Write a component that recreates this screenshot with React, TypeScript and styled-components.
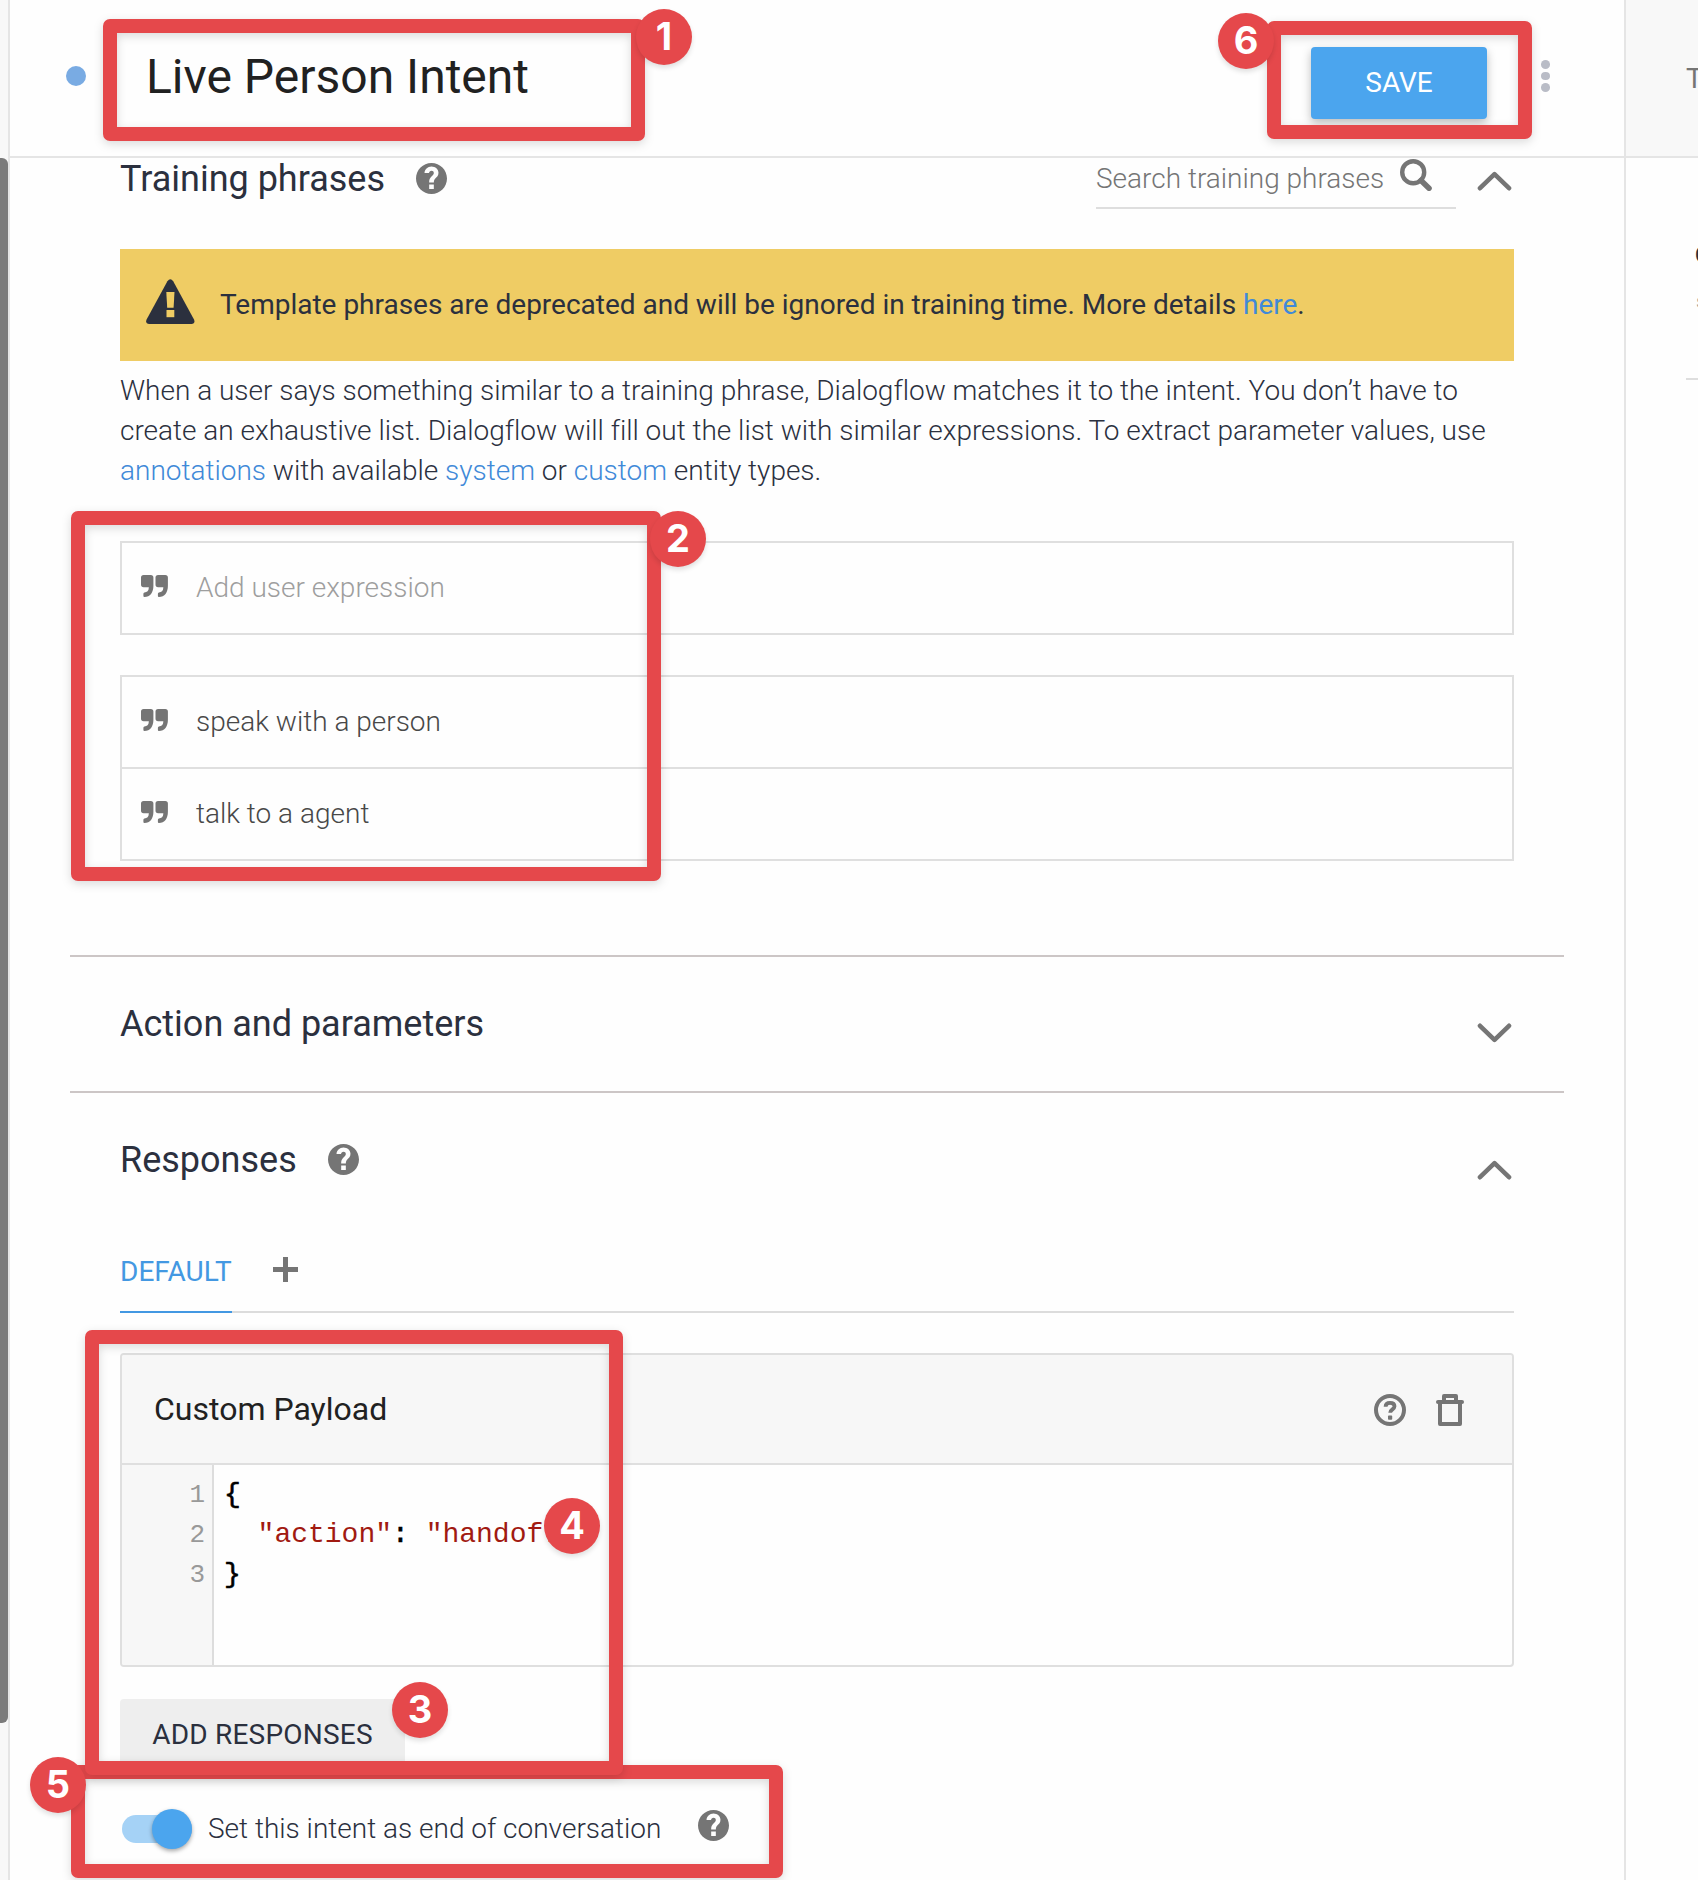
import React from "react";
import styled, { createGlobalStyle, css } from "styled-components";

const GlobalStyle = createGlobalStyle`
  html, body { margin: 0; padding: 0; background: #fefefe; }
  * { box-sizing: border-box; }
  body { font-family: Roboto, "Liberation Sans", sans-serif; overflow: hidden; }
`;

const Page = styled.div`
  position: relative;
  display: flex;
  width: 1698px;
  height: 1880px;
  overflow: hidden;
  color: #2b303e;
  font-size: 28px;
  line-height: 40px;
`;

const ScrollTrack = styled.div`
  width: 10px;
  flex: none;
  padding-top: 158px;
  background: #f8f8f8;
  border-right: 2px solid #e5e5e5;
`;

const ScrollThumb = styled.div`
  width: 8px;
  height: 1565px;
  background: #7b7b7b;
  border-radius: 0 6px 6px 0;
`;

const Main = styled.main`
  flex: none;
  width: 1614px;
  display: flex;
  flex-direction: column;
`;

const Header = styled.header`
  flex: none;
  height: 158px;
  display: flex;
  align-items: flex-start;
  border-bottom: 2px solid #e5e5e5;
  padding-left: 56px;
`;

const StatusDot = styled.span`
  width: 20px;
  height: 20px;
  margin-top: 66px;
  border-radius: 50%;
  background: #79abe3;
`;

const IntentName = styled.h1`
  flex: 1;
  margin: 49px 0 0 60px;
  font-size: 48px;
  line-height: 56px;
  font-weight: 400;
  color: #212121;
`;

const SaveButton = styled.button`
  width: 176px;
  height: 72px;
  margin-top: 47px;
  padding: 0;
  border: 0;
  border-radius: 4px;
  background: #4ba5ee;
  color: #fff;
  font: 400 28px/72px Roboto, sans-serif;
  box-shadow: 0 4px 10px rgba(0, 0, 0, 0.26);
`;

const MoreDots = styled.div`
  display: flex;
  flex-direction: column;
  gap: 3px;
  margin: 60px 74px 0 54px;
`;

const Dot = styled.i`
  width: 9px;
  height: 8.500px;
  border-radius: 50%;
  background: #b9bcc6;
`;

const Section = styled.section<{ $h: number; $divider?: boolean }>`
  flex: none;
  height: ${(p) => p.$h}px;
  margin: 0 60px;
  padding: 0 50px;
  ${(p) => p.$divider && css`border-bottom: 2px solid #ccc6c6;`}
`;

const SectionHead = styled.div<{ $h: number; $pad: number }>`
  display: flex;
  align-items: flex-start;
  height: ${(p) => p.$h}px;
  padding-top: ${(p) => p.$pad}px;
`;

const SectionTitle = styled.h2`
  margin: 0;
  font-size: 36px;
  line-height: 42px;
  font-weight: 400;
`;

const Shift = styled.span<{ $top?: number; $left?: number; $right?: number }>`
  display: block;
  line-height: 0;
  margin: ${(p) => p.$top ?? 0}px ${(p) => p.$right ?? 0}px 0 ${(p) => p.$left ?? 0}px;
`;

const Spacer = styled.span`
  flex: 1;
`;

const SearchBox = styled.div`
  display: flex;
  justify-content: space-between;
  width: 360px;
  height: 51px;
  padding: 0 24px 0 0;
  border-bottom: 2px solid #dedede;
  font-weight: 300;
  line-height: 42px;
  color: #757575;
`;

const Warning = styled.div`
  display: flex;
  align-items: center;
  height: 112px;
  padding-left: 26px;
  background: #efcc64;

  svg {
    margin-bottom: 8px;
  }
`;

const WarningText = styled.span`
  margin-left: 25px;
  letter-spacing: -0.01px;
`;

const Link = styled.a`
  color: #4089d8;
`;

const Paragraph = styled.p`
  margin: 10px 0 50px;
  font-weight: 300;
  letter-spacing: -0.01px;
  font-variant-ligatures: common-ligatures;
`;

const PhraseList = styled.div`
  border: 2px solid #dfdfdf;
  margin-bottom: 40px;
`;

const PhraseRow = styled.div<{ $muted?: boolean }>`
  display: flex;
  align-items: center;
  height: 90px;
  padding: 0 0 0 19px;
  gap: 28px;
  font-weight: 300;
  color: ${(p) => (p.$muted ? "#9e9e9e" : "#484848")};

  svg {
    margin-bottom: 4px;
  }

  & + & {
    height: 92px;
    border-top: 2px solid #dfdfdf;
  }
`;

const Tabs = styled.div`
  display: flex;
  height: 73px;
  border-bottom: 2px solid #dcdcdc;
`;

const Tab = styled.div`
  width: 112px;
  height: 73px;
  padding-top: 12px;
  border-bottom: 2px solid #4398e2;
  color: #4398e2;
`;

const Card = styled.div`
  height: 314px;
  margin-top: 40px;
  display: flex;
  flex-direction: column;
  border: 2px solid #dfdfdf;
  border-radius: 4px;
  overflow: hidden;
`;

const CardHead = styled.div`
  display: flex;
  align-items: center;
  height: 110px;
  flex: none;
  padding: 0 48px 0 32px;
  gap: 30px;
  border-bottom: 2px solid #dfdfdf;
  background: #f7f7f7;
  color: #212121;
  font-size: 32px;

  svg {
    margin-top: 2px;
  }
`;

const Editor = styled.div`
  flex: 1;
  display: flex;
  font-family: "Liberation Mono", monospace;
`;

const Gutter = styled.div`
  width: 92px;
  padding: 10px 7px 0 0;
  border-right: 2px solid #dddddd;
  background: #f7f7f7;
  color: #999;
  font-size: 26px;
  text-align: right;
`;

const Code = styled.pre`
  margin: 0;
  padding: 10px 0 0 10px;
  font: inherit;
  color: #000;
  -webkit-text-stroke: 0.6px #000;
`;

const Str = styled.span`
  color: #a11a11;
  -webkit-text-stroke: 0;
`;

const AddButton = styled.button`
  display: block;
  width: 285px;
  height: 72px;
  margin-top: 32px;
  padding: 0;
  border: 0;
  border-radius: 4px;
  background: #eeeeee;
  color: #2b303e;
  font: 400 28px/70px Roboto, sans-serif;
  letter-spacing: 0.2px;
`;

const EndRow = styled.div`
  display: flex;
  align-items: flex-start;
  margin-top: 38px;
  padding-left: 2px;
  font-weight: 300;
`;

const ToggleTrack = styled.span`
  display: flex;
  justify-content: flex-end;
  align-items: center;
  width: 70px;
  height: 28px;
  margin: 6px 16px 0 0;
  border-radius: 14px;
  background: #a5d2f6;
`;

const ToggleThumb = styled.span`
  flex: none;
  width: 40px;
  height: 40px;
  border-radius: 50%;
  background: #4ba5ee;
  box-shadow: 0 2px 4px rgba(0, 0, 0, 0.35);
`;

const Console = styled.aside`
  flex: none;
  width: 74px;
  border-left: 2px solid #e5e5e5;
  overflow: hidden;
  white-space: nowrap;
`;

const ConsoleHead = styled.div`
  height: 158px;
  padding: 59px 0 0 60px;
  border-bottom: 2px solid #e5e5e5;
  background: #f8f8f8;
  color: #757575;
`;

const ConsoleBody = styled.div`
  height: 222px;
  margin-left: 60px;
  padding: 77px 0 0 9px;
  border-bottom: 2px solid #dedede;
`;

const AgentName = styled.div`
  font-size: 24px;
  font-weight: 700;
`;

const AgentNote = styled.div`
  padding: 6px 0 0 1px;
  font-size: 20px;
  color: #999;
`;

const Frame = styled.div<{ $x: number; $y: number; $w: number; $h: number }>`
  position: absolute;
  left: ${(p) => p.$x}px;
  top: ${(p) => p.$y}px;
  width: ${(p) => p.$w}px;
  height: ${(p) => p.$h}px;
  border: 14px solid #e5484b;
  border-radius: 7px;
  filter: drop-shadow(0 3px 5px rgba(0, 0, 0, 0.14));
`;

const Badge = styled.div<{ $x: number; $y: number }>`
  position: absolute;
  left: ${(p) => p.$x}px;
  top: ${(p) => p.$y}px;
  width: 56px;
  height: 56px;
  border-radius: 50%;
  background: #e5484b;
  color: #fff;
  font: 700 38px/54px Inter, sans-serif;
  text-align: center;
  box-shadow: 0 3px 5px rgba(0, 0, 0, 0.12);
`;

const GREY = "#757575";

const HelpFilled = () => (
  <svg width="31" height="31" viewBox="2 2 20 20" fill={GREY}>
    <path d="M12 2C6.48 2 2 6.48 2 12s4.48 10 10 10 10-4.48 10-10S17.52 2 12 2zm1.5 16.8h-3v-2.9h3v2.9zm2.35-8.3-.95.95c-.9.9-1.4 1.6-1.4 3.05h-3v-.6c0-1.1.5-2.1 1.2-2.9l1.25-1.25c.4-.35.55-.8.55-1.25 0-.95-.65-1.5-1.5-1.5s-1.6.65-1.6 1.5H7.5C7.5 6.1 9.5 4.2 12 4.2s4.5 1.8 4.5 4.1c0 .9-.25 1.65-.65 2.2z" />
  </svg>
);

const HelpOutline = () => (
  <svg width="32" height="32" viewBox="0 0 32 32" fill="none">
    <circle cx="16" cy="16" r="14" stroke={GREY} strokeWidth="4" />
    <path d="M11.600 12.700c0-2.500 1.700-3.900 4.400-3.900 2.800 0 4.500 1.400 4.500 3.500 0 3.100-4.300 3.100-4.300 6.500" stroke={GREY} strokeWidth="3.800" />
    <rect x="14" y="21.600" width="4.200" height="4.200" rx=".8" fill={GREY} />
  </svg>
);

const Trash = () => (
  <svg width="28" height="32" viewBox="0 0 28 32" fill="none" stroke={GREY} strokeWidth="4" strokeLinejoin="round" strokeLinecap="round">
    <path d="M4 8v22h20V8" />
    <path d="M2 8h24" />
    <path d="M8 7.500V2h12v5.500" />
  </svg>
);

const Chevron = ({ down }: { down?: boolean }) => (
  <svg width="35" height="20" viewBox="0 0 35 20" fill="none" stroke={GREY} strokeWidth="4.600" strokeLinecap="round" strokeLinejoin="round">
    <path d={down ? "M3 2.800 17.500 16.800 32 2.800" : "M3 17.200 17.500 3.200 32 17.200"} />
  </svg>
);

const SearchIcon = () => (
  <svg width="32" height="32" viewBox="0 0 32 32" fill="none" stroke={GREY}>
    <circle cx="13.2" cy="13.2" r="11" strokeWidth="4.4" />
    <path d="M21 21.5 29 29.2" strokeWidth="5.6" strokeLinecap="round" />
  </svg>
);

const WarnIcon = () => (
  <svg width="49" height="45" viewBox="0 0 49 45">
    <path d="M21.4 2.2Q24.3-1.8 27.2 2.2L48 40.5Q49.6 44.8 45.4 45H3.2Q-1 44.8.6 40.5Z" fill="#2b303e" />
    <path d="M20.3 13h8.2l-.9 15.8h-6.4z" fill="#efcc64" />
    <rect x="20.5" y="31" width="7.8" height="7.2" fill="#efcc64" />
  </svg>
);

const QuoteIcon = () => (
  <svg width="27" height="22" viewBox="0 0 27 22" fill={GREY}>
    <path d="M2.6 0h7.2q2.6 0 2.6 2.6v8.2c0 6.8-3.2 11.2-9 11.2q-1 0-1-1v-2.2q0-1 1-1.2c2.6-.3 4.4-1.8 4.4-4.8v-.6H2.6Q0 12.200 0 9.600v-7q0-2.600 2.600-2.600z" />
    <path d="M17.100 0h7.200q2.600 0 2.600 2.600v8.200c0 6.800-3.200 11.200-9 11.200q-1 0-1-1v-2.200q0-1 1-1.200c2.600-.3 4.400-1.800 4.400-4.800v-.6h-5.200q-2.600 0-2.600-2.600v-7q0-2.600 2.600-2.600z" />
  </svg>
);

const PlusIcon = () => (
  <svg width="25" height="25" viewBox="0 0 25 25" stroke={GREY} strokeWidth="5">
    <path d="M12.500 0v25M0 12.500h25" />
  </svg>
);

const frames = [
  { x: 103, y: 19, w: 542, h: 122 },
  { x: 1267, y: 21, w: 265, h: 118 },
  { x: 71, y: 511, w: 590, h: 370 },
  { x: 71, y: 1765, w: 712, h: 113 },
  { x: 85, y: 1330, w: 538, h: 445 },
];

const badges = [
  { n: 1, x: 636, y: 9 },
  { n: 6, x: 1218, y: 13 },
  { n: 2, x: 650, y: 511 },
  { n: 4, x: 544, y: 1498 },
  { n: 3, x: 392, y: 1682 },
  { n: 5, x: 30, y: 1757 },
];

export default function App() {
  return (
    <Page>
      <GlobalStyle />
      <ScrollTrack>
        <ScrollThumb />
      </ScrollTrack>
      <Main>
        <Header>
          <StatusDot />
          <IntentName>Live Person Intent</IntentName>
          <SaveButton>SAVE</SaveButton>
          <MoreDots>
            <Dot />
            <Dot />
            <Dot />
          </MoreDots>
        </Header>

        <Section $h={799} $divider>
          <SectionHead $h={91} $pad={0}>
            <SectionTitle>Training phrases</SectionTitle>
            <Shift $top={5} $left={31}>
              <HelpFilled />
            </Shift>
            <Spacer />
            <SearchBox>
              Search training phrases
              <Shift $top={1}>
                <SearchIcon />
              </Shift>
            </SearchBox>
            <Shift $top={13} $left={21} $right={2}>
              <Chevron />
            </Shift>
          </SectionHead>
          <Warning>
            <WarnIcon />
            <WarningText>
              Template phrases are deprecated and will be ignored in training time. More details <Link>here</Link>.
            </WarningText>
          </Warning>
          <Paragraph>
            When a user says something similar to a training phrase, Dialogflow matches it to the intent. You don’t have to
            <br />
            create an exhaustive list. Dialogflow will fill out the list with similar expressions. To extract parameter values, use
            <br />
            <Link>annotations</Link> with available <Link>system</Link> or <Link>custom</Link> entity types.
          </Paragraph>
          <PhraseList>
            <PhraseRow $muted>
              <QuoteIcon />
              Add user expression
            </PhraseRow>
          </PhraseList>
          <PhraseList>
            <PhraseRow>
              <QuoteIcon />
              speak with a person
            </PhraseRow>
            <PhraseRow>
              <QuoteIcon />
              talk to a agent
            </PhraseRow>
          </PhraseList>
        </Section>

        <Section $h={136} $divider>
          <SectionHead $h={134} $pad={46}>
            <SectionTitle>Action and parameters</SectionTitle>
            <Spacer />
            <Shift $top={20} $right={2}>
              <Chevron down />
            </Shift>
          </SectionHead>
        </Section>

        <Section $h={787}>
          <SectionHead $h={147} $pad={46}>
            <SectionTitle>Responses</SectionTitle>
            <Shift $top={5} $left={31}>
              <HelpFilled />
            </Shift>
            <Spacer />
            <Shift $top={21} $right={2}>
              <Chevron />
            </Shift>
          </SectionHead>
          <Tabs>
            <Tab>DEFAULT</Tab>
            <Shift $top={17} $left={41}>
              <PlusIcon />
            </Shift>
          </Tabs>
          <Card>
            <CardHead>
              Custom Payload
              <Spacer />
              <HelpOutline />
              <Trash />
            </CardHead>
            <Editor>
              <Gutter>
                <div>1</div>
                <div>2</div>
                <div>3</div>
              </Gutter>
              <Code>
                {"{\n  "}
                <Str>"action"</Str>
                {": "}
                <Str>"handoff"</Str>
                {"\n}"}
              </Code>
            </Editor>
          </Card>
          <AddButton>ADD RESPONSES</AddButton>
          <EndRow>
            <ToggleTrack>
              <ToggleThumb />
            </ToggleTrack>
            Set this intent as end of conversation
            <Shift $top={1} $left={37}>
              <HelpFilled />
            </Shift>
          </EndRow>
        </Section>
      </Main>

      <Console>
        <ConsoleHead>Try it now</ConsoleHead>
        <ConsoleBody>
          <AgentName>G</AgentName>
          <AgentNote>s</AgentNote>
        </ConsoleBody>
      </Console>

      {frames.map((f) => (
        <Frame key={f.y} $x={f.x} $y={f.y} $w={f.w} $h={f.h} />
      ))}
      {badges.map((b) => (
        <Badge key={b.n} $x={b.x} $y={b.y}>
          {b.n}
        </Badge>
      ))}
    </Page>
  );
}
